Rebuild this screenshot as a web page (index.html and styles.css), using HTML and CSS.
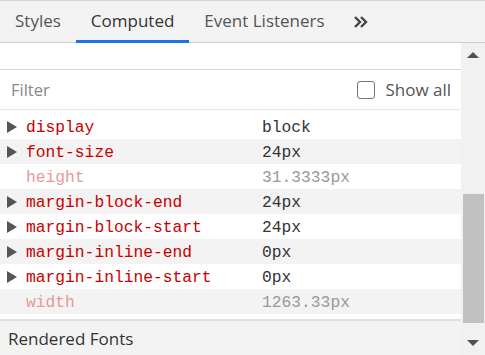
FILE: index.html
```html
<!DOCTYPE html>
<html lang="en">
<head>
    <meta charset="UTF-8">
    <title>Computed</title>
    <link rel="stylesheet" href="styles.css">
</head>
<body>

<div class="tabbar">
    <div class="tab">Styles</div>
    <div class="tab active">Computed</div>
    <div class="tab">Event Listeners</div>
    <div class="tab more">
        <svg width="14" height="12" viewBox="0 0 14 12">
            <path d="M1 1 L6 6 L1 11 M7 1 L12 6 L7 11" fill="none" stroke="#444" stroke-width="2.4"/>
        </svg>
    </div>
</div>

<div class="main">
    <div class="pane">
        <div class="filter-row">
            <span class="filter">Filter</span>
            <label class="show-all"><span class="box"></span>Show all</label>
        </div>

        <div class="props">
            <div class="prop"><span class="arrow"></span><span class="name">display</span><span class="value">block</span></div>
            <div class="prop"><span class="arrow"></span><span class="name">font-size</span><span class="value">24px</span></div>
            <div class="prop faded"><span class="arrow"></span><span class="name">height</span><span class="value">31.3333px</span></div>
            <div class="prop"><span class="arrow"></span><span class="name">margin-block-end</span><span class="value">24px</span></div>
            <div class="prop"><span class="arrow"></span><span class="name">margin-block-start</span><span class="value">24px</span></div>
            <div class="prop"><span class="arrow"></span><span class="name">margin-inline-end</span><span class="value">0px</span></div>
            <div class="prop"><span class="arrow"></span><span class="name">margin-inline-start</span><span class="value">0px</span></div>
            <div class="prop faded"><span class="arrow"></span><span class="name">width</span><span class="value">1263.33px</span></div>
        </div>

        <div class="section">Rendered Fonts</div>
    </div>

    <div class="scrollbar">
        <div class="btn up"></div>
        <div class="track"><div class="thumb"></div></div>
        <div class="btn down"></div>
    </div>
</div>

</body>
</html>
```

FILE: styles.css
```css
body {
    margin: 0;
    font-family: "Open Sans", "Noto Sans", sans-serif;
    background-color: #fff;
    width: 485px;
    height: 355px;
    overflow: hidden;
}

.tabbar {
    display: flex;
    height: 43px;
    background-color: #f3f3f3;
    border-top: 1px solid #d3d3d3;
    border-bottom: 1px solid #cccccc;
    box-sizing: border-box;
}

.tab {
    display: flex;
    align-items: center;
    padding: 0 15px;
    font-size: 17px;
    color: #555;
    border-bottom: 3px solid transparent;
    margin-bottom: -1px;
    box-sizing: border-box;
}

.tab.active {
    color: #333;
    border-bottom-color: #1a73e8;
}

.tab.more {
    padding: 2px 15px 0 14px;
}

.main {
    display: flex;
    height: 312px;
}

.pane {
    flex: 1;
    padding-top: 26px;
}

.filter-row {
    display: flex;
    align-items: center;
    justify-content: space-between;
    height: 41px;
    box-sizing: border-box;
    border-top: 1px solid #d6d6d6;
    border-bottom: 1px solid #e8e8e8;
    padding: 0 10px 0 11px;
    font-size: 16.5px;
}

.filter {
    color: #888;
}

.show-all {
    display: flex;
    align-items: center;
    color: #555;
    font-size: 17px;
}

.show-all .box {
    width: 16px;
    height: 16px;
    border: 1px solid #767676;
    border-radius: 3px;
    margin-right: 10px;
}

.props {
    padding-top: 4px;
}

.prop {
    display: flex;
    align-items: center;
    height: 25px;
    padding-top: 2px;
    box-sizing: border-box;
    font-family: "Liberation Mono", "DejaVu Sans Mono", monospace;
    font-size: 16.3px;
}

.prop:nth-child(even) {
    background-color: #f3f3f3;
}

.arrow {
    width: 0;
    height: 0;
    margin: -2px 9px 0 7px;
    border-top: 6px solid transparent;
    border-bottom: 6px solid transparent;
    border-left: 10px solid #555;
}

.faded .arrow {
    visibility: hidden;
}

.name {
    width: 236px;
    color: #c80000;
}

.value {
    color: #333;
}

.faded .name {
    color: #e89a9a;
}

.faded .value {
    color: #999;
}

.section {
    margin-top: 5px;
    border-top: 2px solid #e0e0e0;
    background-color: #f3f3f3;
    height: 40px;
    padding-left: 8px;
    padding-top: 6px;
    box-sizing: border-box;
    font-size: 17px;
    color: #333;
}

.scrollbar {
    width: 24px;
    background-color: #f1f1f1;
    display: flex;
    flex-direction: column;
}

.btn {
    height: 24px;
    display: flex;
    justify-content: center;
    align-items: center;
}

.btn.up::before {
    content: "";
    border-left: 6px solid transparent;
    border-right: 6px solid transparent;
    border-bottom: 6px solid #505050;
}

.btn.down::before {
    content: "";
    border-left: 6px solid transparent;
    border-right: 6px solid transparent;
    border-top: 6px solid #505050;
}

.track {
    flex: 1;
    padding-top: 127px;
}

.thumb {
    margin: 0 1px 0 2px;
    height: 129px;
    background-color: #c1c1c1;
}
```
